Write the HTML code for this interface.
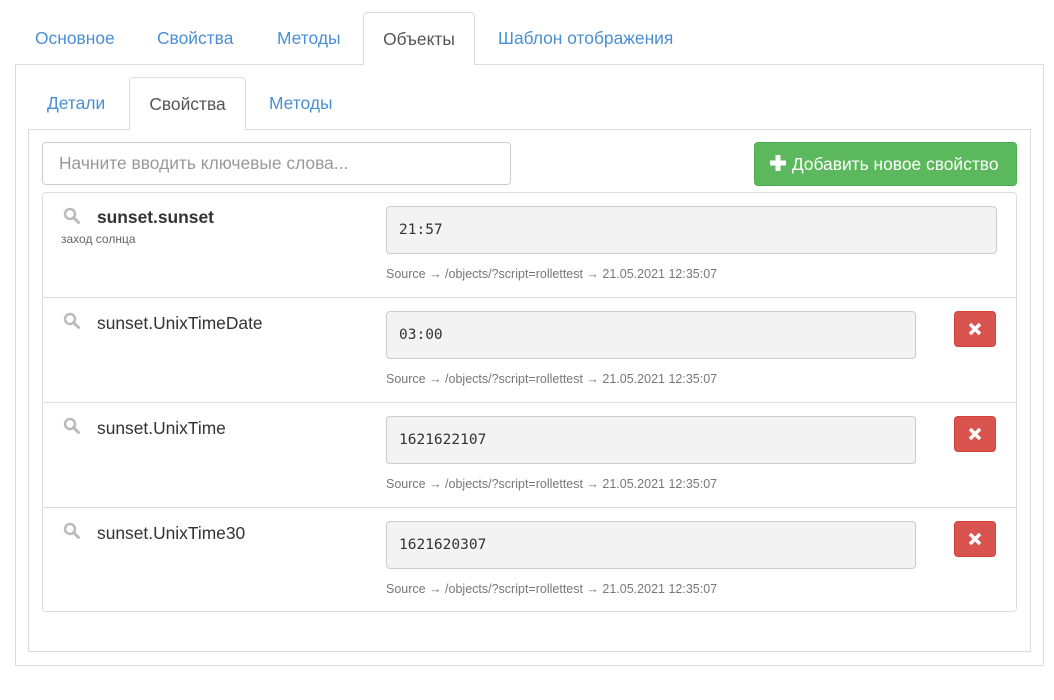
<!DOCTYPE html>
<html><head><meta charset="utf-8"><style>
*{box-sizing:border-box}
body{margin:0;width:1054px;height:700px;background:#fff;font-family:"Liberation Sans",sans-serif;position:relative;overflow:hidden;color:#333}
.a{position:absolute}
.tab{position:absolute;font-size:17.4px;color:#4a8fd4;line-height:20px}
.act{border:1px solid #ddd;border-bottom:none;border-radius:4px 4px 0 0;background:#fff;color:#555;text-align:center}
.box{position:absolute;border:1px solid #ddd}
.name{position:absolute;left:97px;font-size:17.4px;color:#333}
.inp{position:absolute;left:386px;height:48px;background:#f3f3f3;border:1px solid #ccc;border-radius:4px;font-family:"DejaVu Sans Mono","Liberation Mono",monospace;font-size:14.5px;padding:15px 12px;color:#333;line-height:17px}
.src{position:absolute;left:386px;font-size:12.5px;color:#777}
.del{position:absolute;left:954px;width:42px;height:36px;background:#d9534f;border:1px solid #d43f3a;border-radius:4px}
.ic{position:absolute;left:63px}
</style></head><body>
<div class="box" style="left:15px;top:64px;width:1029px;height:602px"></div>
<div class="a act" style="left:363px;top:12px;width:112px;height:53px;padding-top:16px;font-size:17.4px">Объекты</div>
<div class="tab" style="left:35px;top:28px">Основное</div>
<div class="tab" style="left:157px;top:28px">Свойства</div>
<div class="tab" style="left:277px;top:28px">Методы</div>
<div class="tab" style="left:498px;top:28px">Шаблон отображения</div>

<div class="box" style="left:28px;top:129px;width:1003px;height:523px"></div>
<div class="a act" style="left:129px;top:77px;width:117px;height:53px;padding-top:16px;font-size:17.4px">Свойства</div>
<div class="tab" style="left:47px;top:93px">Детали</div>
<div class="tab" style="left:269px;top:93px">Методы</div>

<div class="a" style="left:42px;top:142px;width:469px;height:43px;border:1px solid #ccc;border-radius:4px;font-size:17.4px;color:#999;padding:10px 16px">Начните вводить ключевые слова...</div>
<div class="a" style="left:754px;top:142px;width:263px;height:44px;background:#5cb85c;border:1px solid #4cae4c;border-radius:4px;color:#fff;font-size:17.4px;padding:11px 0 0 14px;white-space:nowrap"><svg width="18" height="18" style="vertical-align:-2px" viewBox="0 0 18 18"><path d="M6.5 1h5v5.5h5.5v5h-5.5v5.5h-5v-5.5h-5.5v-5h5.5z" fill="#fff"/></svg> Добавить новое свойство</div>

<div class="box" style="left:42px;top:192px;width:975px;height:420px;border-radius:4px"></div>
<div class="a" style="left:43px;top:297px;width:973px;height:1px;background:#ddd"></div>
<div class="a" style="left:43px;top:402px;width:973px;height:1px;background:#ddd"></div>
<div class="a" style="left:43px;top:507px;width:973px;height:1px;background:#ddd"></div>

<svg class="ic" style="top:207px" width="18" height="18" viewBox="0 0 18 18"><circle cx="7" cy="7" r="5" fill="none" stroke="#bbb" stroke-width="2.5"/><path d="M10.5 10.5l5 5" stroke="#bbb" stroke-width="3" stroke-linecap="round"/></svg>
<div class="name" style="top:207px;font-weight:bold">sunset.sunset</div>
<div class="a" style="left:61px;top:232px;font-size:12px;color:#666">заход солнца</div>
<div class="inp" style="top:206px;width:611px">21:57</div>
<div class="src" style="top:267px">Source → /objects/?script=rollettest → 21.05.2021 12:35:07</div>

<svg class="ic" style="top:312px" width="18" height="18" viewBox="0 0 18 18"><circle cx="7" cy="7" r="5" fill="none" stroke="#bbb" stroke-width="2.5"/><path d="M10.5 10.5l5 5" stroke="#bbb" stroke-width="3" stroke-linecap="round"/></svg>
<div class="name" style="top:313px">sunset.UnixTimeDate</div>
<div class="inp" style="top:311px;width:530px">03:00</div>
<div class="src" style="top:372px">Source → /objects/?script=rollettest → 21.05.2021 12:35:07</div>
<div class="del" style="top:311px"><svg width="40" height="34" viewBox="0 0 40 34"><path d="M15 12l10 10M25 12l-10 10" stroke="#fff" stroke-width="3.5"/></svg></div>

<svg class="ic" style="top:417px" width="18" height="18" viewBox="0 0 18 18"><circle cx="7" cy="7" r="5" fill="none" stroke="#bbb" stroke-width="2.5"/><path d="M10.5 10.5l5 5" stroke="#bbb" stroke-width="3" stroke-linecap="round"/></svg>
<div class="name" style="top:418px">sunset.UnixTime</div>
<div class="inp" style="top:416px;width:530px">1621622107</div>
<div class="src" style="top:477px">Source → /objects/?script=rollettest → 21.05.2021 12:35:07</div>
<div class="del" style="top:416px"><svg width="40" height="34" viewBox="0 0 40 34"><path d="M15 12l10 10M25 12l-10 10" stroke="#fff" stroke-width="3.5"/></svg></div>

<svg class="ic" style="top:522px" width="18" height="18" viewBox="0 0 18 18"><circle cx="7" cy="7" r="5" fill="none" stroke="#bbb" stroke-width="2.5"/><path d="M10.5 10.5l5 5" stroke="#bbb" stroke-width="3" stroke-linecap="round"/></svg>
<div class="name" style="top:523px">sunset.UnixTime30</div>
<div class="inp" style="top:521px;width:530px">1621620307</div>
<div class="src" style="top:582px">Source → /objects/?script=rollettest → 21.05.2021 12:35:07</div>
<div class="del" style="top:521px"><svg width="40" height="34" viewBox="0 0 40 34"><path d="M15 12l10 10M25 12l-10 10" stroke="#fff" stroke-width="3.5"/></svg></div>
</body></html>
